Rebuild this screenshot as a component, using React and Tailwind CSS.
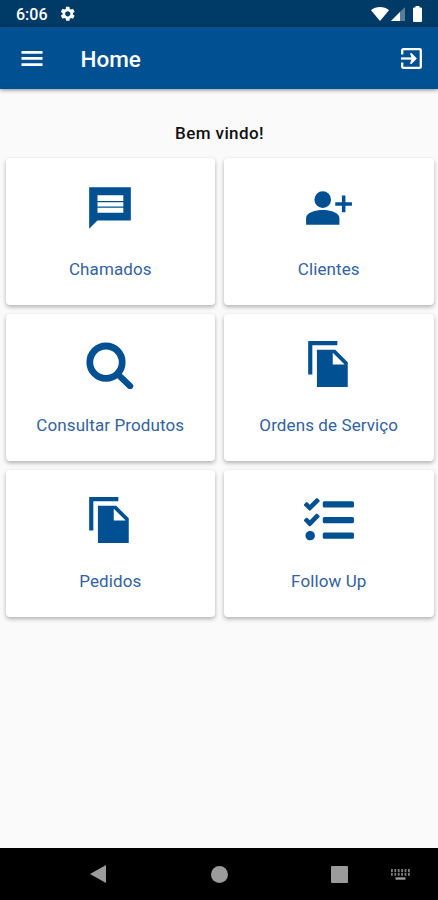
import React from 'react';
import { FaTasks } from 'react-icons/fa';
import { MdSettings } from 'react-icons/md';

const ChatIcon = () => (
    <svg viewBox="0 0 24 24" className="size-[50px]" fill="currentColor">
        <path d="M2 2h20v16H6l-4 4z" />
        <path d="M6 5.9h12.4v2.7H6zM6 9.2h12.4v2.1H6zM6 11.9h12.4v2.4H6z" fill="#fff" />
    </svg>
);

const PersonAddIcon = () => (
    <svg viewBox="0 0 24 24" className="size-[50px]" fill="currentColor">
        <circle cx="9" cy="8" r="4" />
        <path d="M1 20v-3.2C1 14.2 5.6 13 9 13s8 1.2 8 3.8V20z" />
        <path d="M18.2 6h1.700v3.200H23v1.700h-3.100V14h-1.700v-3.100H15V9.200h3.200z" />
    </svg>
);

const SearchIcon = () => (
    <svg viewBox="0 0 50 50" className="size-[50px]" fill="none" stroke="currentColor">
        <circle cx="21" cy="23.2" r="16.2" strokeWidth="6.8" />
        <path d="M33 35.500L45 47" strokeWidth="6.500" strokeLinecap="round" />
    </svg>
);

const FilesIcon = () => (
    <svg viewBox="0 0 24 24" className="size-[50px]" fill="currentColor">
        <path d="M2 1h14v2H4v14H2z" />
        <path d="M6.200 5.200H15l6 6V23H6.200zM13.800 6.600v5.600h5.700z" fillRule="evenodd" />
    </svg>
);

const TasksIcon = () => <FaTasks className="size-[50px]" />;

const cards = [
    { label: 'Chamados', icon: ChatIcon },
    { label: 'Clientes', icon: PersonAddIcon },
    { label: 'Consultar Produtos', icon: SearchIcon },
    { label: 'Ordens de Serviço', icon: FilesIcon },
    { label: 'Pedidos', icon: FilesIcon },
    { label: 'Follow Up', icon: TasksIcon },
];

const StatusBar = () => (
    <div className="flex h-[27px] items-center bg-[#003a67] px-4 text-white">
        <span className="w-[31px] pt-[2px] text-[16px] font-medium leading-none">6:06</span>
        <MdSettings className="ml-[11.5px] size-[17.5px]" />
        <div className="ml-auto flex items-center">
            <svg viewBox="0 0 18 14" className="h-[14px] w-[18px]" fill="currentColor">
                <path d="M9 14L0 3.200C5 -1 13 -1 18 3.200z" />
            </svg>
            <svg viewBox="0 0 14 14" className="ml-[2px] mt-px size-[14px]" fill="currentColor">
                <path d="M14 0v14H0z" opacity=".35" />
                <path d="M9 5v9H0z" />
            </svg>
            <svg viewBox="0 0 9 16" className="ml-2 h-4 w-[9px]" fill="currentColor">
                <path d="M2.500 0h4v1.500H8a1 1 0 0 1 1 1V15a1 1 0 0 1-1 1H1a1 1 0 0 1-1-1V2.500a1 1 0 0 1 1-1h1.500z" />
            </svg>
        </div>
    </div>
);

const Header = () => (
    <header className="flex h-[62px] items-center bg-[#005092] pl-[21px] pr-[16px] text-white shadow-[0_1px_4px_rgba(0,0,0,0.45)]">
        <svg viewBox="0 0 22 15" className="mt-px h-[15px] w-[22px]" fill="currentColor">
            <path d="M.5 0h21v2.700H.5zM.5 6.100h21v2.700H.5zM.5 12.200h21v2.700H.5z" />
        </svg>
        <h1 className="ml-[37.5px] pt-[3px] text-[22.500px] font-medium leading-none">Home</h1>
        <svg viewBox="0 0 21 21" className="ml-auto mt-px size-[21px]" fill="none" stroke="currentColor">
            <path d="M1.200 6.500V2.200a1 1 0 0 1 1-1h16.600a1 1 0 0 1 1 1v16.600a1 1 0 0 1-1 1H2.200a1 1 0 0 1-1-1v-4.300" strokeWidth="2.300" />
            <path d="M0 10.500h11" strokeWidth="2.300" />
            <path d="M9 5.200l1.500-.3 5.400 5.600-5.400 5.600-1.500-.3 1.700-5.300z" fill="currentColor" stroke="none" />
        </svg>
    </header>
);

const Card = ({ label, icon: Icon }) => (
    <button className="flex h-[147px] flex-col items-center rounded-[4px] bg-white pt-[25px] text-[#005092] shadow-[0_2px_4px_rgba(0,0,0,0.3)]">
        <Icon />
        <span className="mt-[26px] text-[17px] leading-5 tracking-[0.100px] text-[#33629f]">{label}</span>
    </button>
);

const NavBar = () => (
    <nav className="flex h-[52px] items-center bg-black pl-[90px] text-[#9b9b9b]">
        <svg viewBox="0 0 16 18" className="h-[18px] w-4" fill="currentColor">
            <path d="M16 0v18L0 9z" />
        </svg>
        <span className="ml-[105px] size-[17px] rounded-full bg-[#9b9b9b]" />
        <span className="ml-[103px] size-[17px] rounded-[1px] bg-[#9b9b9b]" />
        <svg viewBox="0 0 19 11" className="ml-[43px] h-[11px] w-[19px]" fill="currentColor">
            {[0, 3.8].map((y) =>
                [0, 3.4, 6.8, 10.2, 13.6, 17].map((x) => (
                    <rect key={`${x}-${y}`} x={x} y={y} width="1.8" height="3" opacity=".8" />
                ))
            )}
            <rect x="4.500" y="8.300" width="10" height="2.400" />
        </svg>
    </nav>
);

export default function App() {
    return (
        <div className="flex h-[900px] w-full flex-col overflow-hidden bg-[#fafafa] font-['Roboto',sans-serif]">
            <StatusBar />
            <Header />
            <main className="flex-1 pl-[5.500px] pr-[4.500px]">
                <h2 className="mt-[34px] text-center text-[17px] font-medium leading-5 tracking-[0.400px] text-[#111]">
                    Bem vindo!
                </h2>
                <div className="mt-[15px] grid grid-cols-2 gap-[9px]">
                    {cards.map((card) => (
                        <Card key={card.label} {...card} />
                    ))}
                </div>
            </main>
            <NavBar />
        </div>
    );
}
